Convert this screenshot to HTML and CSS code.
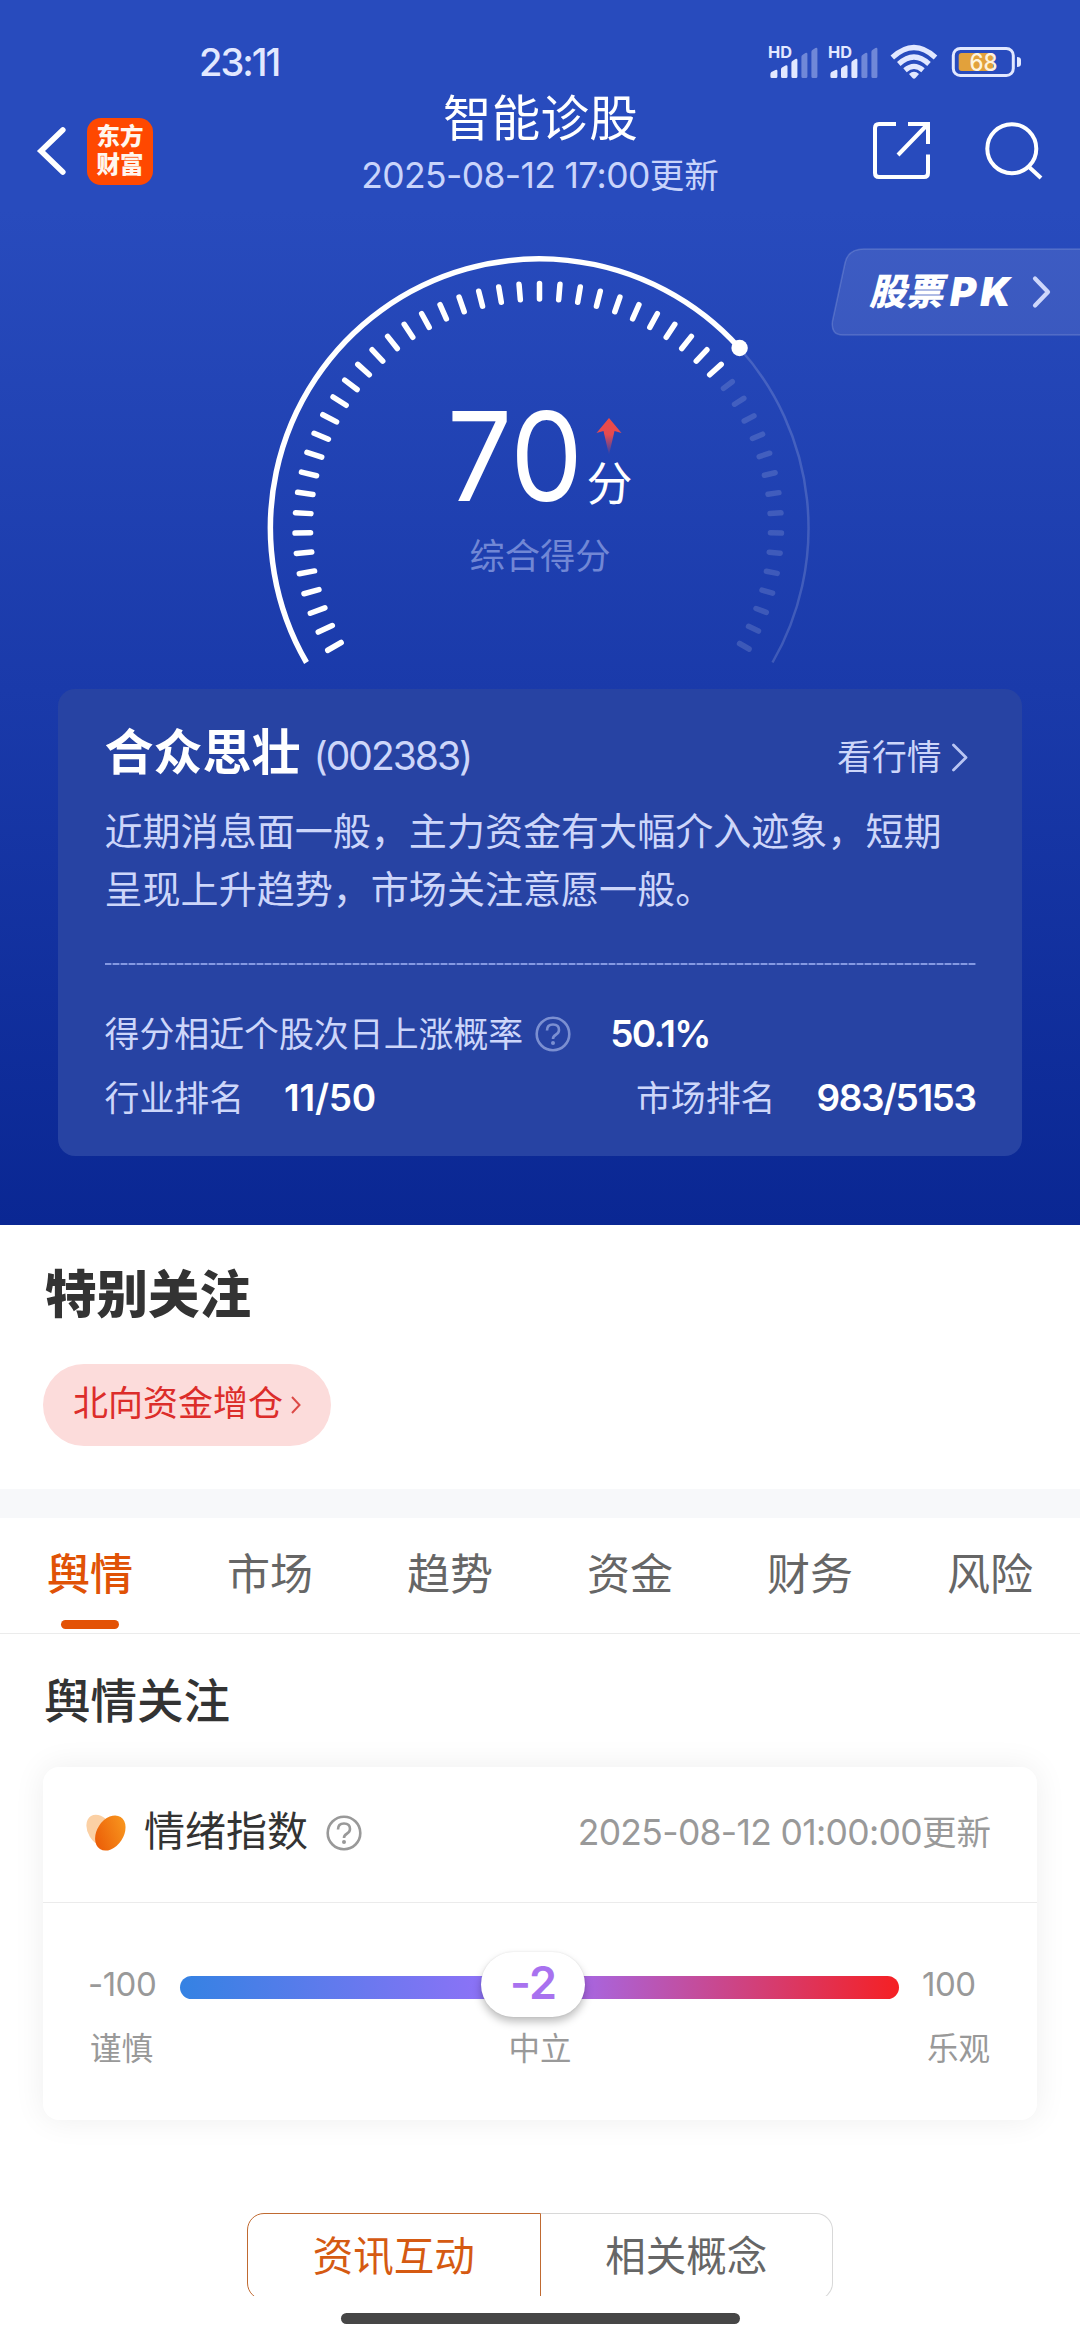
FILE: index.html
```html
<!DOCTYPE html>
<html lang="zh-CN">
<head>
<meta charset="utf-8">
<title>智能诊股</title>
<link rel="stylesheet" href="styles.css">
</head>
<body>
<div class="screen">
  <section class="hero">
    <div class="status">
      <span class="clock">23:11</span>
      <svg class="status-icons" viewBox="766 40 260 44" width="260" height="44">
        <defs>
          <g id="signal">
            <text x="0" y="58" class="hd" textLength="24" lengthAdjust="spacingAndGlyphs">HD</text>
            <path class="lit" d="M2.4 74q0-1 1-2l4-2q2-.6 2 1v5.500q0 1.500-1.500 1.500h-4q-1.500 0-1.500-1.500z"/>
            <path class="lit" d="M13 69.500q0-1.500 1-2l3.500-2q2-.6 2 1v10q0 1.500-1.500 1.500h-3.500q-1.500 0-1.500-1.500z"/>
            <path class="lit" d="M23.400 63q0-1.500 1-2l3-2q2-.6 2 1v16.500q0 1.500-1.500 1.500h-3q-1.500 0-1.500-1.500z"/>
            <path class="dim" d="M33.400 57q0-1.500 1-2l3-2q2-.6 2 1v22.500q0 1.500-1.500 1.500h-3q-1.500 0-1.500-1.500z"/>
            <path class="dim" d="M43.400 52q0-1.500 1-2l3-2q2-.6 2 1v27.500q0 1.500-1.500 1.500h-3q-1.500 0-1.500-1.500z"/>
          </g>
        </defs>
        <use href="#signal" x="768"/>
        <use href="#signal" x="828"/>
        <g fill="none" stroke="#e2e8ff" stroke-width="5.200">
          <path d="M892.300 57.500Q914 37.500 935.500 57.500"/>
          <path d="M898.800 64Q914 50 929 64"/>
          <path d="M905 70.200Q914 62.500 923 70.200"/>
        </g>
        <path fill="#e2e8ff" d="M909 74q5-4.500 10 0l-3.500 4q-1.500 1.500-3 0z"/>
        <rect x="953.300" y="48.500" width="60" height="27" rx="7" fill="none" stroke="#e2e8ff" stroke-width="3"/>
        <rect x="958.700" y="53" width="34.500" height="18" rx="3" fill="#e2a13b"/>
        <path fill="#e2e8ff" d="M1017 57q4 0 4 3v4q0 3-4 3z"/>
        <text x="969.500" y="71" class="battery-text" textLength="28" lengthAdjust="spacingAndGlyphs">68</text>
      </svg>
    </div>

    <header class="header">
      <div class="header-left">
        <svg width="32" height="54" viewBox="36 124 32 54"><path d="M62.800 130L41 151l21.800 21" fill="none" stroke="#fff" stroke-width="5.600" stroke-linecap="round"/></svg>
        <div class="app-logo"><span>东方</span><span>财富</span></div>
      </div>
      <div class="header-title">
        <h1>智能诊股</h1>
        <p>2025-08-12 17:00<span class="cjk">更新</span></p>
      </div>
      <div class="header-right">
        <svg width="60" height="60" viewBox="872 121 60 60" fill="none" stroke="#fff" stroke-width="4"><path d="M896 124h-17q-4 0-4 4v45q0 4 4 4h45q4 0 4-4v-18.500M908 124h20v20M927 125l-29 30"/></svg>
        <svg width="60" height="60" viewBox="984 120 60 60" fill="none" stroke="#fff" stroke-width="4"><circle cx="1011.800" cy="147.700" r="24.500"/><path d="M1028.500 165.500l12.500 11.500"/></svg>
      </div>
    </header>

    <div class="gauge">
      <svg width="1080" height="471" viewBox="0 218 1080 471">
        <defs>
          <linearGradient id="arrow" x1="0" y1="0" x2="0" y2="1">
            <stop offset="0" stop-color="#ee4b45"/><stop offset=".45" stop-color="#e54a50"/><stop offset="1" stop-color="#e54a50" stop-opacity="0"/>
          </linearGradient>
        </defs>
        <path class="arc-dim" d="M739.400 348A269 269 0 0 1 772.500 662.500"/>
        <path class="arc-lit" d="M306.500 662.500A269 269 0 0 1 739.400 348"/>
        <g id="ticks"></g>
        <circle cx="739.600" cy="348" r="8.200" fill="#fff"/>
        <text class="score" x="447" y="501" textLength="136" lengthAdjust="spacingAndGlyphs">70</text>
        <path d="M609 418l12.500 15-7-2-5.500 24-5.500-24-7 2z" fill="url(#arrow)"/>
        <text class="score-unit" x="586.500" y="500">分</text>
        <text class="score-label" x="540" y="569" text-anchor="middle">综合得分</text>
      </svg>
      <a class="pk">
        <svg class="pk-shape" width="250" height="88" viewBox="0 0 250 88"><path d="M256 1H33Q17 1 14 15L1.500 73Q-.5 87 12 87H256z" fill="#fff" fill-opacity=".1" stroke="#fff" stroke-opacity=".16" stroke-width="1.500"/></svg>
        <span class="pk-cn">股票</span><span class="pk-en">PK</span>
        <svg width="20" height="34" viewBox="0 0 20 34"><path d="M3 3.500L16 17 3 30.500" fill="none" stroke="#c9d3fb" stroke-width="4.200" stroke-linecap="round" stroke-linejoin="round"/></svg>
      </a>
    </div>

    <div class="stock">
      <div class="stock-head">
        <h2>合众思壮</h2><span class="code">(002383)</span>
        <a class="quote">看行情<svg width="18" height="30" viewBox="0 0 18 30"><path d="M2.500 3L15 15.500 2.500 28" fill="none" stroke="#b9c5f3" stroke-width="2.800" stroke-linecap="round" stroke-linejoin="round"/></svg></a>
      </div>
      <p class="desc">近期消息面一般，主力资金有大幅介入迹象，短期呈现上升趋势，市场关注意愿一般。</p>
      <div class="dash"></div>
      <div class="stat-row">
        <span class="label">得分相近个股次日上涨概率</span>
        <svg class="help" width="36" height="36" viewBox="0 0 36 36"><circle cx="18" cy="18" r="16.300"/><path d="M12 14.500q0-6 6-6t6 5.500q0 3-3.500 5-2.500 1.500-2.500 4"/><circle class="dot" cx="18" cy="27" r="2"/></svg>
        <b class="prob">50.1%</b>
      </div>
      <div class="stat-row">
        <span class="label">行业排名</span><b class="rank-a">11/50</b>
        <span class="label push">市场排名</span><b class="rank-b">983/5153</b>
      </div>
    </div>
  </section>

  <section class="special">
    <h2>特别关注</h2>
    <a class="pill"><span>北向资金增仓</span><svg width="12" height="20" viewBox="0 0 12 20"><path d="M2 2l7.500 8L2 18" fill="none" stroke="#dc4a47" stroke-width="2"/></svg></a>
  </section>

  <nav class="tabs">
    <a class="tab active">舆情</a><a class="tab">市场</a><a class="tab">趋势</a><a class="tab">资金</a><a class="tab">财务</a><a class="tab">风险</a>
  </nav>

  <section class="opinion">
    <h3>舆情关注</h3>
    <div class="mood">
      <div class="mood-head">
        <svg width="40" height="38" viewBox="0 0 40 38">
          <defs><linearGradient id="petal" x1=".8" y1="0" x2=".3" y2="1"><stop offset="0" stop-color="#f9991f"/><stop offset="1" stop-color="#eb5c07"/></linearGradient></defs>
          <ellipse cx="14" cy="16.500" rx="12" ry="17" transform="rotate(-32 14 16.500)" fill="#fbd0a4"/>
          <ellipse cx="24.300" cy="19" rx="13.300" ry="19" transform="rotate(33 24.300 19)" fill="url(#petal)"/>
        </svg>
        <span class="mood-title">情绪指数</span>
        <svg class="help gray" width="36" height="36" viewBox="0 0 36 36"><circle cx="18" cy="18" r="16.300"/><path d="M12 14.500q0-6 6-6t6 5.500q0 3-3.500 5-2.500 1.500-2.500 4"/><circle class="dot" cx="18" cy="27" r="2"/></svg>
        <span class="mood-time">2025-08-12 01:00:00<span class="cjk">更新</span></span>
      </div>
      <div class="scale">
        <span class="scale-min">-100</span>
        <div class="track"><span class="thumb">-2</span></div>
        <span class="scale-max">100</span>
      </div>
      <div class="scale-labels"><span>谨慎</span><span>中立</span><span>乐观</span></div>
    </div>
  </section>

  <div class="segment-wrap">
    <div class="segment"><a class="on">资讯互动</a><a>相关概念</a></div>
  </div>
  <div class="home-bar"></div>
</div>
<script src="script.js"></script>
</body>
</html>
```
FILE: styles.css
```css
* { box-sizing: border-box; }
body { margin: 0; background: #fff; }
h1, h2, h3, p { margin: 0; font-weight: 400; }
.screen {
  width: 1080px; height: 2340px; overflow: hidden;
  display: flex; flex-direction: column;
  font-family: Inter, "Noto Sans CJK SC", sans-serif;
  white-space: nowrap; color: #333;
}
svg { display: block; flex: none; }
text { font-family: Inter, "Noto Sans CJK SC", sans-serif; }

.hero {
  height: 1225px; flex: none; display: flex; flex-direction: column;
  background: linear-gradient(#284bbd 0, #284bbd 210px, #1a3aaa 690px, #0a2793 1225px);
  color: #fff;
}
.status {
  height: 84px; padding: 40px 54px 0 199px;
  display: flex; justify-content: space-between; align-items: center;
}
.clock { font-size: 38px; line-height: 44px; font-weight: 500; color: #e2e8ff; letter-spacing: -2px; }
.hd { font-size: 16px; font-weight: 700; fill: #e2e8ff; }
.lit { fill: #e2e8ff; }
.dim { fill: #7088d8; }
.battery-text { font-size: 24px; font-weight: 500; fill: #fdf3dd; }

.header { height: 134px; display: grid; grid-template-columns: 1fr auto 1fr; align-items: center; }
.header-left { display: flex; align-items: center; gap: 19px; padding-left: 36px; }
.app-logo {
  width: 66px; height: 67px; border-radius: 14px; background: #ff4800;
  display: flex; flex-direction: column; align-items: center; justify-content: center;
  font-size: 23.500px; line-height: 28px; font-weight: 900; color: #fff6ee;
}
.header-title { align-self: start; padding-top: 5px; text-align: center; }
.header-title h1 { font-size: 48.500px; line-height: 60px; letter-spacing: .3px; padding-left: 1px; }
.header-title p { font-size: 35.500px; line-height: 44px; margin-top: 5px; color: #c9d4fb; letter-spacing: -.65px; }
.cjk { font-size: 34.500px; letter-spacing: 0; }
.header-right { display: flex; justify-content: flex-end; gap: 52px; padding-right: 36px; }

.gauge { position: relative; height: 471px; }
.arc-lit { fill: none; stroke: #fff; stroke-width: 5.500; }
.arc-dim { fill: none; stroke: #fff; stroke-opacity: .16; stroke-width: 2.500; }
.tick { stroke: #fff; stroke-width: 5.500; stroke-linecap: round; }
.tick.off { stroke-opacity: .15; }
.score { font-size: 124px; fill: #fff; }
.score-unit { font-size: 46px; fill: #fff; }
.score-label { font-size: 35.300px; fill: #7187d5; }
.pk {
  position: absolute; right: 0; top: 30px; width: 249px; height: 88px;
  display: flex; align-items: center; padding-left: 38px; color: #fff;
}
.pk-shape { position: absolute; left: 0; top: 0; }
.pk-cn, .pk-en { font-size: 37px; font-weight: 900; font-style: italic; line-height: 44px; position: relative; }
.pk-en { font-size: 40px; margin-left: 7px; margin-right: 17px; letter-spacing: 4px; }

.stock { margin: 0 58px; height: 467px; border-radius: 17px; background: #2743a3; padding: 34px 46.500px 0; color: #cdd6fa; }
.stock-head { display: flex; height: 60px; align-items: baseline; line-height: 60px; }
.stock-head h2 { font-size: 49px; font-weight: 700; color: #fff; }
.code { font-size: 39px; margin-left: 13px; letter-spacing: -2px; }
.quote { margin: -1px 0 0 auto; display: flex; align-items: center; gap: 9px; padding-right: 7px; font-size: 34.800px; line-height: 56px; }
.desc { margin-top: 19px; font-size: 38.050px; line-height: 58px; white-space: normal; }
.dash { margin-top: 45px; height: 2px; background: repeating-linear-gradient(90deg, #8398e2 0 6px, #4f68bd 6px 8px); }
.dash + .stat-row { margin-top: 37px; }
.stat-row { height: 64px; display: flex; align-items: center; font-size: 34.900px; line-height: 64px; }
.stat-row b { font-size: 37px; font-weight: 600; color: #fff; }
.help { fill: none; stroke: #7b8fd1; stroke-width: 2.600; margin-left: 12px; }
.help .dot { fill: #7b8fd1; stroke: none; }
.help.gray { stroke: #999; margin-left: 18px; }
.help.gray .dot { fill: #999; }
.stat-row .prob { margin-left: 39px; letter-spacing: -1.700px; }
.stat-row .rank-a { margin-left: 40px; letter-spacing: -.2px; }
.push { margin-left: auto; }
.stat-row .rank-b { margin-left: 41px; letter-spacing: -1.450px; }

.special { height: 264px; flex: none; padding: 39px 43px 0; }
.special h2 { font-size: 51.500px; line-height: 60px; font-weight: 900; padding-left: 2px; }
.pill {
  margin-top: 40px; width: 288px; height: 82px; border-radius: 41px; background: #fcdcdb;
  display: flex; align-items: center; padding-left: 30px; gap: 7px; font-size: 35px; line-height: 44px; color: #dc2d2a;
}
.pill span { padding-bottom: 4px; }

.tabs { flex: none; height: 145px; border-top: 29px solid #f7f8fa; border-bottom: 1px solid #ebebeb; display: flex; }
.tab { width: 180px; padding-top: 26px; display: flex; flex-direction: column; align-items: center; font-size: 43px; line-height: 60px; color: #666; }
.tab.active { color: #e05206; font-weight: 500; }
.tab.active::after { content: ""; width: 58px; height: 9px; border-radius: 5px; background: #e35205; margin-top: 16px; }

.opinion { flex: none; padding: 37px 43px 0; }
.opinion h3 { font-size: 46.500px; line-height: 60px; font-weight: 500; padding-left: 1px; }
.mood { margin-top: 36px; height: 353px; border-radius: 16px; background: #fff; box-shadow: 0 0 32px rgba(0, 0, 0, .07); }
.mood-head { height: 136px; padding: 0 46px 3px 43px; border-bottom: 1px solid #ebebeb; display: flex; align-items: center; }
.mood-title { font-size: 41px; margin-left: 18px; line-height: 50px; padding-bottom: 5px; }
.mood-time { margin-left: auto; font-size: 35.500px; line-height: 44px; padding-bottom: 1px; color: #999; letter-spacing: -.68px; }
.scale { height: 66px; margin-top: 49px; display: flex; align-items: center; font-size: 33px; color: #999; }
.scale-min { width: 137px; padding-left: 45px; margin-top: -2px; letter-spacing: -.5px; }
.scale-max { margin-left: 23px; margin-top: -2px; letter-spacing: -.5px; }
.track { position: relative; width: 719px; height: 23px; margin-top: 5px; border-radius: 12px; background: linear-gradient(90deg, #3482e3, #9d6ffa 50%, #f52023); }
.thumb {
  position: absolute; left: 301px; top: -24px; width: 104px; height: 65px; border-radius: 33px; background: #fff;
  box-shadow: 0 5px 8px rgba(0, 0, 0, .25), 0 0 2px rgba(0, 0, 0, .1);
  text-align: center; font-size: 45px; line-height: 62px; font-weight: 600; color: #a872ef; letter-spacing: -1px;
}
.scale-labels { margin: 11px 47px 0 47px; display: flex; justify-content: space-between; font-size: 31.500px; line-height: 40px; color: #999; }

.segment-wrap { flex: none; height: 83px; margin: 93px 247px 0; overflow: hidden; }
.segment { height: 87px; display: flex; font-size: 40.500px; line-height: 85px; text-align: center; color: #666; }
.segment a { flex: 1; border: 1px solid #d8d8d8; border-left: 0; border-radius: 0 17px 17px 0; }
.segment .on { color: #d55a12; border: 1px solid #c06a31; border-radius: 17px 0 0 17px; }
.home-bar { flex: none; width: 399px; height: 11px; border-radius: 6px; background: #464646; margin: 17px auto 0; }
```
FILE: script.js
```js
// Tick marks of the score dial: 51 marks over 240 degrees, lit up to 70%.
const group = document.getElementById('ticks');
for (let i = -25; i <= 25; i++) {
  const on = i <= 10;
  const line = document.createElementNS('http://www.w3.org/2000/svg', 'line');
  line.setAttribute('x1', 539.5);
  line.setAttribute('x2', 539.5);
  line.setAttribute('y1', 528 - (on ? 244.5 : 242));
  line.setAttribute('y2', 528 - (on ? 229 : 231));
  line.setAttribute('transform', `rotate(${i * 4.8} 539.5 528)`);
  line.setAttribute('class', on ? 'tick' : 'tick off');
  group.appendChild(line);
}
```
